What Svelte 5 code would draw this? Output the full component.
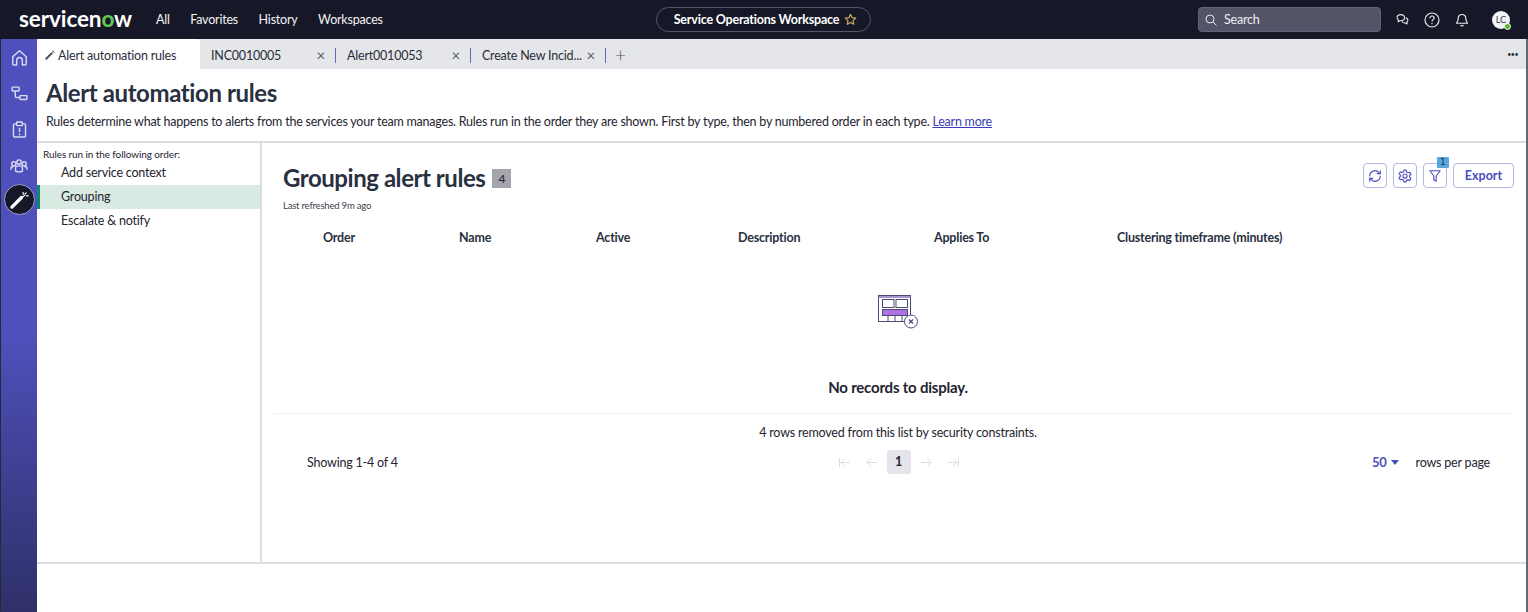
<script lang="ts">
  const navLinks = ['All', 'Favorites', 'History', 'Workspaces'];
  const tabs = [
    { label: 'INC0010005', width: 136 },
    { label: 'Alert0010053', width: 135 },
    { label: 'Create New Incid...', width: 135 }
  ];
  const ruleTypes = ['Add service context', 'Grouping', 'Escalate & notify'];
  const columns = [
    { label: 'Order', width: 136 },
    { label: 'Name', width: 137 },
    { label: 'Active', width: 142 },
    { label: 'Description', width: 196 },
    { label: 'Applies To', width: 183 },
    { label: 'Clustering timeframe (minutes)', width: 240 }
  ];
  let activeRule = 'Grouping';
</script>

<div class="shell">
  <header class="topbar">
    <div class="logo">servicen<span class="logo-o">o</span>w</div>
    <nav class="nav">
      {#each navLinks as link}
        <span>{link}</span>
      {/each}
    </nav>
    <div class="workspace-pill">
      <span>Service Operations Workspace</span>
      <svg width="13" height="13" viewBox="0 0 24 24" fill="none" stroke="#c9a865" stroke-width="2.2" stroke-linejoin="round">
        <path d="M12 2.5l2.9 6.2 6.8.8-5 4.6 1.3 6.7-6-3.4-6 3.4 1.3-6.7-5-4.6 6.8-.8z" />
      </svg>
    </div>
    <div class="search">
      <svg width="12" height="12" viewBox="0 0 24 24" fill="none" stroke="#e4e5ea" stroke-width="2">
        <circle cx="10" cy="10" r="8" />
        <path d="M16 16l7 7" />
      </svg>
      <span>Search</span>
    </div>
    <div class="top-icons">
      <svg width="13" height="13" viewBox="0 0 24 24" fill="none" stroke="#e8e8ee" stroke-width="2" stroke-linejoin="round">
        <path d="M9 3c-4 0-7 2.400-7 5.500 0 1.800 1 3.300 2.500 4.300L4 16l3.500-1.800c.6.100 1 .2 1.500.2 4 0 6.800-2.500 6.800-5.900C15.800 5.400 13 3 9 3z" />
        <path d="M18 9c2.500.6 4 2.400 4 4.600 0 1.500-.8 2.800-2 3.600l.5 3-3.200-1.700c-3 .3-5.300-.8-6.300-3" />
      </svg>
      <svg width="16" height="16" viewBox="0 0 24 24" fill="none" stroke="#e8e8ee" stroke-width="1.800">
        <circle cx="12" cy="12" r="10.500" />
        <path d="M8.800 9.200c0-1.900 1.400-3.200 3.200-3.200s3.200 1.200 3.200 2.900c0 2.500-3.200 2.600-3.200 5.300" />
        <path d="M12 16.500v2" />
      </svg>
      <svg width="14" height="14" viewBox="0 0 24 24" fill="none" stroke="#e8e8ee" stroke-width="2" stroke-linejoin="round">
        <path d="M12 2.500c-4 0-6.500 3-6.500 7 0 4-1 6-3 8h19c-2-2-3-4-3-8 0-4-2.500-7-6.500-7z" />
        <path d="M9.500 20.500c.5 1 1.400 1.500 2.500 1.500s2-.5 2.500-1.500" />
      </svg>
      <div class="avatar">LC<span class="presence"></span></div>
    </div>
  </header>

  <div class="body-row">
    <aside class="rail">
      <svg class="rail-icon" width="17" height="17" viewBox="0 0 24 24" fill="none" stroke="#d9d9f3" stroke-width="2" stroke-linejoin="round">
        <path d="M2.500 11L12 2.500 21.500 11v10a1.500 1.500 0 0 1-1.500 1.500h-4V16a4 4 0 0 0-8 0v6.500H4A1.500 1.500 0 0 1 2.500 21z" />
      </svg>
      <svg class="rail-icon" width="17" height="17" viewBox="0 0 24 24" fill="none" stroke="#d9d9f3" stroke-width="2">
        <rect x="1.500" y="3" width="10" height="5.500" rx="1" />
        <rect x="12.500" y="15" width="10" height="5.500" rx="1" />
        <path d="M6 8.500v7c0 1.500.8 2.200 2 2.200h4.500" />
      </svg>
      <svg class="rail-icon" width="17" height="17" viewBox="0 0 24 24" fill="none" stroke="#d9d9f3" stroke-width="2" stroke-linejoin="round">
        <path d="M8 4H5a1.500 1.500 0 0 0-1.500 1.500V21A1.500 1.500 0 0 0 5 22.500h14a1.500 1.500 0 0 0 1.500-1.500V5.500A1.500 1.500 0 0 0 19 4h-3" />
        <rect x="8" y="1.500" width="8" height="5" rx="1" />
        <path d="M12 10v6M12 18v2" />
      </svg>
      <svg class="rail-icon" width="18" height="17" viewBox="0 0 26 24" fill="none" stroke="#d9d9f3" stroke-width="2">
        <circle cx="5.500" cy="9.500" r="3" />
        <circle cx="13" cy="7" r="3.200" />
        <circle cx="20.500" cy="9.500" r="3" />
        <path d="M1.500 18v-2c0-1.500 1.500-2.500 4-2.500M24.500 18v-2c0-1.500-1.500-2.500-4-2.500" />
        <path d="M8 20v-5c0-1.500 2-2.500 5-2.500s5 1 5 2.500v5c-3 1.500-7 1.500-10 0z" />
      </svg>
      <div class="rail-active">
        <svg width="20" height="20" viewBox="0 0 24 24" fill="none" stroke="#fff" stroke-linecap="round">
          <path d="M3.500 20.500L15 9" stroke-width="4" />
          <path d="M17 3v2M21 7h2M19.500 4.500l1-1M17 8l2-2" stroke-width="1.500" />
        </svg>
      </div>
    </aside>

    <div class="content">
      <div class="tabbar">
        <div class="tab active-tab">
          <svg width="10" height="10" viewBox="0 0 24 24" fill="none" stroke="#55585f" stroke-linecap="round">
            <path d="M3 21L16 8" stroke-width="5" />
            <path d="M19 2v2M22 6h1M20 4l1-1" stroke-width="2" />
          </svg>
          <span>Alert automation rules</span>
        </div>
        {#each tabs as tab}
          <div class="tab" style="width: {tab.width}px">
            <span class="tab-label">{tab.label}</span>
            <span class="tab-close">×</span>
            <span class="tab-sep"></span>
          </div>
        {/each}
        <span class="tab-add">+</span>
        <span class="tab-more">•••</span>
      </div>

      <section class="page-head">
        <h1>Alert automation rules</h1>
        <p>
          Rules determine what happens to alerts from the services your team manages. Rules run in the order they are shown. First by type, then by numbered order in each type.
          <a href="#learn">Learn more</a>
        </p>
      </section>

      <div class="split">
        <aside class="rules-side">
          <div class="side-caption">Rules run in the following order:</div>
          {#each ruleTypes as rule}
            <div class="rule-item" class:selected={rule === activeRule}>{rule}</div>
          {/each}
        </aside>

        <main class="list-panel">
          <div class="list-head">
            <div>
              <div class="title-row">
                <h2>Grouping alert rules</h2>
                <span class="count">4</span>
              </div>
              <div class="refreshed">Last refreshed 9m ago</div>
            </div>
            <div class="actions">
              <button class="icon-btn" aria-label="Refresh">
                <svg width="14" height="14" viewBox="0 0 24 24" fill="none" stroke="#4f52bd" stroke-width="2" stroke-linecap="round">
                  <path d="M3 12a9 9 0 0 1 15.500-6.300L21 8" />
                  <path d="M21 12a9 9 0 0 1-15.500 6.300L3 16" />
                  <path d="M21 3v5h-5M3 21v-5h5" />
                </svg>
              </button>
              <button class="icon-btn" aria-label="Settings">
                <svg width="14" height="14" viewBox="0 0 24 24" fill="none" stroke="#4f52bd" stroke-width="2" stroke-linejoin="round">
                  <path d="M10 2h4l.7 3 2.500 1.400 3-.9 2 3.500-2.200 2.100v2.800l2.200 2.100-2 3.500-3-.9L14.700 19 14 22h-4l-.7-3-2.500-1.400-3 .9-2-3.500 2.200-2.100v-2.800L1.800 8.500l2-3.500 3 .9L9.300 5z" />
                  <circle cx="12" cy="12" r="3.500" />
                </svg>
              </button>
              <button class="icon-btn filter-btn" aria-label="Filter">
                <svg width="14" height="14" viewBox="0 0 24 24" fill="none" stroke="#4f52bd" stroke-width="2" stroke-linejoin="round">
                  <path d="M3 3h18l-7 9v9l-4-2v-7z" />
                </svg>
                <span class="filter-badge">1</span>
              </button>
              <button class="export-btn">Export</button>
            </div>
          </div>

          <div class="col-row">
            {#each columns as col}
              <div style="width: {col.width}px">{col.label}</div>
            {/each}
          </div>

          <div class="empty">
            <svg width="42" height="36" viewBox="0 0 42 36" fill="none" stroke="#4e4a78" stroke-width="1">
              <rect x="1.500" y="1.500" width="32" height="26" fill="#fff" />
              <path d="M1.500 3h32" stroke-width="1.500" stroke="#8a6fc0" />
              <rect x="5.500" y="5.500" width="11.500" height="8" />
              <rect x="19" y="5.500" width="11.500" height="8" />
              <rect x="5.500" y="15.500" width="25" height="6" fill="#b072e2" />
              <path d="M11 22v5M18 22v5M25 22v5" />
              <circle cx="34" cy="27.500" r="6.500" fill="#fff" />
              <path d="M32 25.500l4 4M36 25.500l-4 4" stroke-width="1.300" />
            </svg>
            <div class="empty-text">No records to display.</div>
          </div>

          <div class="removed-note">4 rows removed from this list by security constraints.</div>

          <div class="pager-row">
            <span class="showing">Showing 1-4 of 4</span>
            <div class="pager">
              <svg class="pager-end" width="13" height="11" viewBox="0 0 13 11" fill="none" stroke="#dcdde2" stroke-width="1">
                <path d="M1.500 1v9M12 5.500H3M7 1.500l-4 4 4 4" />
              </svg>
              <svg width="11" height="11" viewBox="0 0 11 11" fill="none" stroke="#dcdde2" stroke-width="1">
                <path d="M11 5.500H1M5 1.500l-4 4 4 4" />
              </svg>
              <span class="page-current">1</span>
              <svg width="11" height="11" viewBox="0 0 11 11" fill="none" stroke="#dcdde2" stroke-width="1">
                <path d="M0 5.500h10M6 1.500l4 4-4 4" />
              </svg>
              <svg class="pager-end" width="13" height="11" viewBox="0 0 13 11" fill="none" stroke="#dcdde2" stroke-width="1">
                <path d="M11.500 1v9M1 5.500h9M6 1.500l4 4-4 4" />
              </svg>
            </div>
            <div class="per-page">
              <span class="per-count">50</span>
              <span class="caret"></span>
              <span class="per-label">rows per page</span>
            </div>
          </div>
        </main>
      </div>
    </div>
  </div>
</div>

<style>
  :global(body) {
    margin: 0;
    background: #fff;
    overflow: hidden;
  }
  .shell {
    width: 1528px;
    height: 612px;
    display: flex;
    flex-direction: column;
    font-family: Lato, "Liberation Sans", sans-serif;
    color: #1e2430;
    letter-spacing: -0.2px;
    overflow: hidden;
  }
  .topbar {
    height: 39px;
    flex: none;
    background: #171827;
    display: flex;
    align-items: center;
    color: #fff;
  }
  .logo {
    margin-left: 19px;
    width: 137px;
    font-size: 22.500px;
    font-weight: 700;
    letter-spacing: -0.1px;
    line-height: 39px;
    margin-top: -3px;
  }
  .logo-o {
    color: #62c955;
  }
  .nav {
    display: flex;
    gap: 20.500px;
    font-size: 12.500px;
    color: #f2f2f5;
    width: 500px;
  }
  .workspace-pill {
    width: 215px;
    height: 25px;
    box-sizing: border-box;
    border: 1px solid #55566a;
    border-radius: 13px;
    padding-left: 4px;
    display: flex;
    align-items: center;
    justify-content: center;
    gap: 5px;
    font-size: 12.500px;
    font-weight: 700;
  }
  .search {
    margin-left: 327px;
    width: 183px;
    height: 25px;
    box-sizing: border-box;
    background: #535468;
    border: 1px solid #62637a;
    border-radius: 4px;
    display: flex;
    align-items: center;
    gap: 7px;
    padding-left: 6px;
    font-size: 12.500px;
    color: #eeeef2;
  }
  .top-icons {
    margin-left: 15px;
    display: flex;
    align-items: center;
    gap: 15px;
  }
  .avatar {
    position: relative;
    margin-left: 8px;
    width: 18px;
    height: 18px;
    border-radius: 50%;
    background: #f4f4f6;
    color: #3d4150;
    font-size: 9.500px;
    line-height: 18px;
    text-align: center;
  }
  .presence {
    position: absolute;
    right: -1px;
    bottom: -1px;
    width: 5px;
    height: 5px;
    border-radius: 50%;
    background: #55b82e;
    border: 1px solid #fff;
  }
  .body-row {
    flex: 1;
    display: flex;
    min-height: 0;
  }
  .rail {
    width: 37px;
    flex: none;
    border-left: 1px solid #1f2d3a;
    background: linear-gradient(180deg, #5050bd 0%, #5050bd 51%, #2f3068 100%);
    display: flex;
    flex-direction: column;
    align-items: center;
    padding-top: 10px;
    box-sizing: border-box;
  }
  .rail-icon {
    flex: none;
    margin-bottom: 19px;
  }
  .rail-active {
    width: 29px;
    height: 29px;
    margin-top: -9px;
    border-radius: 50%;
    background: #171827;
    border: 1px solid #9b9cc9;
    display: flex;
    align-items: center;
    justify-content: center;
    box-sizing: content-box;
  }
  .content {
    flex: 1;
    min-width: 0;
    display: flex;
    flex-direction: column;
    border-right: 2px solid #5f6a74;
  }
  .tabbar {
    height: 30px;
    flex: none;
    background: #e4e6ea;
    display: flex;
    align-items: center;
    font-size: 12.500px;
    color: #2a2e38;
  }
  .tab {
    position: relative;
    height: 100%;
    box-sizing: border-box;
    display: flex;
    align-items: center;
    flex: none;
    padding: 2px 0 0 11px;
  }
  .active-tab {
    width: 163px;
    background: #fff;
    border-radius: 4px 4px 0 0;
    gap: 3px;
    padding-left: 8px;
  }
  .tab-label {
    white-space: nowrap;
  }
  .tab-close {
    position: absolute;
    right: 11px;
    top: 8px;
    font-size: 15px;
    color: #5a5e68;
    line-height: 17px;
  }
  .tab-sep {
    position: absolute;
    right: 0;
    top: 9px;
    height: 15px;
    width: 1px;
    background: #6266c4;
  }
  .tab-add {
    margin-left: 9px;
    font-size: 19px;
    font-weight: 300;
    color: #4d515c;
    line-height: 1;
  }
  .tab-more {
    margin-left: auto;
    margin-right: 8px;
    font-size: 7px;
    letter-spacing: -0.500px;
  }
  .page-head {
    height: 74px;
    flex: none;
    box-sizing: border-box;
    padding: 9px 9px 0;
    border-bottom: 2px solid #dcdde2;
  }
  h1 {
    margin: 0;
    font-size: 24px;
    font-weight: 700;
    letter-spacing: -0.4px;
    line-height: 30px;
    color: #293040;
  }
  .page-head p {
    margin: 5px 0 0;
    font-size: 12.500px;
    letter-spacing: -0.225px;
    line-height: 17px;
    color: #1e2430;
  }
  .page-head a {
    color: #3a3fb5;
    text-decoration: underline;
  }
  .split {
    height: 419px;
    flex: none;
    display: flex;
    border-bottom: 2px solid #dcdde2;
  }
  .rules-side {
    width: 225px;
    flex: none;
    box-sizing: border-box;
    border-right: 2px solid #dcdde2;
    padding-top: 4px;
  }
  .side-caption {
    padding-left: 6px;
    font-size: 10px;
    letter-spacing: -0.1px;
    line-height: 14px;
    color: #1e2430;
  }
  .rule-item {
    height: 24px;
    line-height: 24px;
    padding-left: 24px;
    font-size: 12.500px;
    box-sizing: border-box;
  }
  .rule-item.selected {
    background: #d9eae3;
    border-left: 3px solid #0f8a68;
    padding-left: 21px;
  }
  .list-panel {
    flex: 1;
    min-width: 0;
    display: flex;
    flex-direction: column;
  }
  .list-head {
    display: flex;
    justify-content: space-between;
    align-items: flex-start;
    padding: 19px 12px 0 21px;
  }
  .title-row {
    display: flex;
    align-items: center;
    gap: 7px;
  }
  h2 {
    margin: 0;
    font-size: 24px;
    font-weight: 700;
    letter-spacing: -0.450px;
    line-height: 32px;
    color: #293040;
  }
  .count {
    width: 19px;
    height: 19px;
    background: #a4a5ad;
    color: #20242e;
    font-size: 12px;
    line-height: 19px;
    text-align: center;
  }
  .refreshed {
    font-size: 9.500px;
    line-height: 12px;
    margin-top: 6px;
    color: #3b404c;
  }
  .actions {
    display: flex;
    gap: 6px;
    margin-top: 1px;
  }
  .icon-btn,
  .export-btn {
    height: 25px;
    box-sizing: border-box;
    background: #fff;
    border: 1px solid #b5b7e6;
    border-radius: 4px;
    padding: 0;
    display: flex;
    align-items: center;
    justify-content: center;
  }
  .icon-btn {
    position: relative;
    width: 24px;
  }
  .filter-badge {
    position: absolute;
    top: -7px;
    right: -3px;
    width: 12px;
    height: 11px;
    background: #56a7e0;
    color: #1c2a3c;
    font-size: 8.500px;
    line-height: 11px;
    text-align: center;
    border-radius: 1px;
    font-family: "DejaVu Sans", sans-serif;
  }
  .export-btn {
    width: 61px;
    font-family: inherit;
    font-size: 12.500px;
    font-weight: 700;
    color: #4b4fb8;
  }
  .col-row {
    display: flex;
    margin-top: 18px;
    padding-left: 61px;
    font-size: 12.500px;
    font-weight: 700;
    line-height: 16px;
    color: #293040;
    white-space: nowrap;
  }
  .empty {
    margin: 0 12px;
    height: 168px;
    box-sizing: border-box;
    border-bottom: 1px solid #f0f0f3;
    display: flex;
    flex-direction: column;
    align-items: center;
    padding: 48px 0 0 8px;
  }
  .empty svg {
    display: block;
  }
  .empty-text {
    margin-top: 47px;
    font-size: 15px;
    font-weight: 700;
    line-height: 20px;
    color: #1e2430;
  }
  .removed-note {
    padding-left: 8px;
    text-align: center;
    font-size: 12.500px;
    line-height: 16px;
    margin-top: 11px;
  }
  .pager-row {
    display: grid;
    grid-template-columns: 1fr auto 1fr;
    align-items: center;
    height: 26px;
    margin-top: 8px;
    padding: 0 36px 0 45px;
    font-size: 12.500px;
  }
  .pager {
    display: flex;
    align-items: center;
    gap: 10px;
  }
  .pager-end:first-child {
    margin-right: 5px;
  }
  .pager-end:last-child {
    margin-left: 5px;
  }
  .page-current {
    width: 24px;
    height: 24px;
    background: #e4e5ea;
    border-radius: 3px;
    font-size: 12.500px;
    font-weight: 700;
    line-height: 24px;
    text-align: center;
  }
  .per-page {
    display: flex;
    align-items: center;
    justify-content: flex-end;
  }
  .per-count {
    color: #4b4fb8;
    font-weight: 700;
    font-size: 13px;
  }
  .caret {
    width: 0;
    height: 0;
    margin-left: 4px;
    border-left: 4px solid transparent;
    border-right: 4px solid transparent;
    border-top: 5px solid #4b4fb8;
  }
  .per-label {
    margin-left: 17px;
  }
</style>
